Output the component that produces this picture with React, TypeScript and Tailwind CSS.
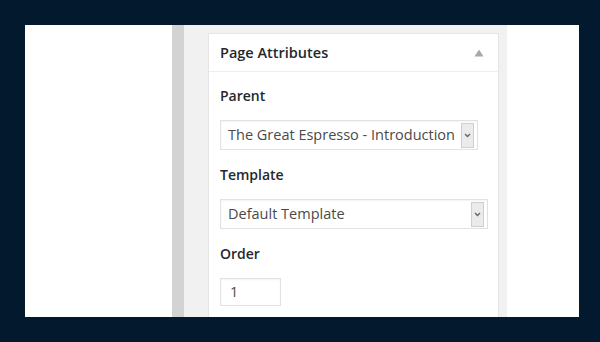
import React from "react";

function Chevron() {
  return (
    <svg width="7" height="5" viewBox="0 0 7 5" fill="none">
      <path d="M1 1 L3.5 3.5 L6 1" stroke="#666" strokeWidth="1.4" />
    </svg>
  );
}

function Select({ text, width }: { text: string; width: string }) {
  return (
    <div className={`${width} h-[30px] border border-[#e2e2e2] bg-white flex items-center justify-between pl-[7px] pr-[3px] shadow-[inset_0_1px_2px_rgba(0,0,0,0.05)]`}>
      <span className="text-[14.5px] text-[#4a4a4a] leading-none whitespace-nowrap">{text}</span>
      <div className="w-[13px] h-[25px] bg-[#ebebeb] border border-[#cfcfcf] flex items-center justify-center">
        <Chevron />
      </div>
    </div>
  );
}

export default function App() {
  return (
    <div
      className="w-[600px] h-[342px] bg-[#031a2e] pt-[25px] pl-[25px] pr-[21px] pb-[25px]"
      style={{ fontFamily: "'Open Sans', 'Noto Sans', sans-serif" }}
    >
      <div className="flex h-full bg-white overflow-hidden">
        <div className="w-[147px] bg-white" />
        <div className="w-[12px] bg-[#d3d3d3]" />
        <div className="w-[323px] bg-[#f1f1f1] pl-[24px] pr-[8px] pt-[8px]">
          <div className="bg-white border border-[#e5e5e5] h-[300px] flex flex-col">
            <div className="h-[38px] border-b border-[#eeeeee] flex items-center justify-between pl-[11px] pr-[14px]">
              <span className="text-[14.5px] font-semibold text-[#23282d]">Page Attributes</span>
              <svg width="10" height="8" viewBox="0 0 10 8">
                <path d="M5 0.5 L9.5 7.5 L0.5 7.5 Z" fill="#a8a8a8" />
              </svg>
            </div>
            <div className="pl-[11px] pt-[14px] flex flex-col">
              <div className="h-[20px] leading-[20px] text-[14px] font-semibold text-[#23282d]">Parent</div>
              <div className="mt-[14px]">
                <Select text="The Great Espresso - Introduction" width="w-[258px]" />
              </div>
              <div className="mt-[15px] h-[20px] leading-[20px] text-[14px] font-semibold text-[#23282d]">Template</div>
              <div className="mt-[14px]">
                <Select text="Default Template" width="w-[268px]" />
              </div>
              <div className="mt-[15px] h-[20px] leading-[20px] text-[14px] font-semibold text-[#23282d]">Order</div>
              <div className="mt-[14px] w-[61px] h-[28px] border border-[#e2e2e2] flex items-center pl-[9px] text-[14.5px] text-[#4a4a4a] shadow-[inset_0_1px_2px_rgba(0,0,0,0.05)]">
                1
              </div>
            </div>
          </div>
        </div>
        <div className="flex-1 bg-white" />
      </div>
    </div>
  );
}
